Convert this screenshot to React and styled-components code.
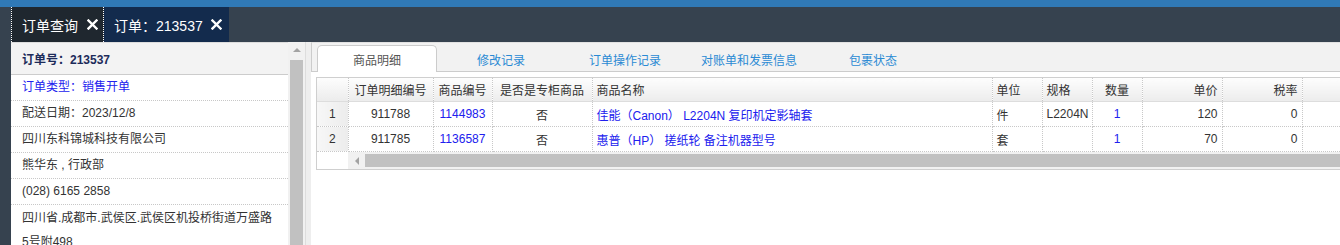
import React from 'react'
import styled, { createGlobalStyle } from 'styled-components'

const GlobalStyle = createGlobalStyle`
    html, body {
        margin: 0;
        padding: 0;
        overflow: hidden;
    }
    body {
        font-family: "Liberation Sans", "Noto Sans CJK SC", sans-serif;
        font-size: 12px;
        color: #333;
    }
`

const Page = styled.div`
    width: 1340px;
    height: 245px;
    display: flex;
    flex-direction: column;
    overflow: hidden;
`
const TopStripe = styled.div`
    height: 7px;
    background: #3079b6;
`
const PageTabs = styled.div`
    height: 35px;
    background: #36424f;
    display: flex;
    padding-left: 11px;
`
const PageTab = styled.div`
    display: flex;
    align-items: center;
    gap: ${p => (p.$current ? 8 : 9)}px;
    padding: 0 ${p => (p.$current ? 7 : 5)}px 0 10px;
    background: ${p => (p.$current ? '#132b4d' : '#1f272f')};
    border-left: ${p => (p.$current ? 'none' : '1px dotted #fff')};
    border-right: ${p => (p.$current ? 'none' : '1px dotted #fff')};
    color: #fff;
    font-size: 14px;
`
const Body = styled.div`
    flex: 1;
    display: flex;
    background: #36424f;
    padding-left: 11px;
    min-height: 0;
`
const LeftPanel = styled.div`
    width: 277px;
    background: #fff;
    overflow: hidden;
    display: flex;
    flex-direction: column;
`
const InfoHeader = styled.div`
    height: 31px;
    flex-shrink: 0;
    display: flex;
    align-items: center;
    padding-left: 11px;
    background: #f3f3f3;
    border-top: 1px solid #ddd;
    border-bottom: 1px solid #ccc;
    color: #1d2b5a;
    font-weight: bold;
`
const InfoRow = styled.div`
    flex-shrink: 0;
    min-height: 25px;
    line-height: ${p => (p.$wrap ? 24 : 25)}px;
    padding: ${p => (p.$wrap ? '1px' : '0')} 15px 0 11px;
    border-bottom: 1px dotted #c8c8c8;
    color: ${p => (p.$blue ? '#2222ee' : '#333')};
`
const VScroll = styled.div`
    width: 17px;
    background: #f1f1f1;
    display: flex;
    flex-direction: column;
    align-items: center;
`
const ArrowUp = styled.div`
    margin-top: 6px;
    width: 0;
    height: 0;
    border-left: 4px solid transparent;
    border-right: 4px solid transparent;
    border-bottom: 4px solid #a3a3a3;
`
const VThumb = styled.div`
    margin-top: 8px;
    width: 13px;
    flex: 1;
    background: #c1c1c1;
`
const Gutter = styled.div`
    width: 5px;
    background: #eee;
    border-left: 1px solid #ddd;
`
const RightPanel = styled.div`
    flex: 1;
    min-width: 0;
    background: #fff;
    overflow: hidden;
    display: flex;
    flex-direction: column;
`
const TabStrip = styled.div`
    height: 26px;
    padding: 2px 0 0 5px;
    display: flex;
    align-items: flex-start;
    gap: 4px;
    background: #f2f2f2;
    border-left: 1px solid #ccc;
    border-top: 1px solid #e2e2e2;
    border-bottom: 1px solid #ccc;
`
const Tab = styled.div`
    width: 118px;
    height: 26px;
    display: flex;
    align-items: center;
    justify-content: center;
    color: ${p => (p.$active ? '#555' : '#2a8ad4')};
    background: ${p => (p.$active ? '#fff' : 'transparent')};
    border: 1px solid ${p => (p.$active ? '#ccc' : 'transparent')};
    border-bottom: none;
    border-radius: 5px 5px 0 0;
    position: relative;
    z-index: 1;
`
const GridArea = styled.div`
    padding: 5px 0 0 5px;
`
const Grid = styled.div`
    width: 1100px;
    border: 1px solid #cfcfcf;
    border-right: none;
`
const Table = styled.table`
    border-collapse: collapse;
    table-layout: fixed;
    width: 1100px;
`
const Th = styled.th`
    height: 23px;
    padding: 0 4px;
    font-weight: normal;
    color: #333;
    text-align: ${p => p.$align || 'left'};
    background: linear-gradient(#fdfdfd, #ececec);
    border-right: 1px dotted #c8c8c8;
    border-bottom: 1px solid #ddd;
    white-space: nowrap;
    overflow: hidden;
`
const Td = styled.td`
    height: 24px;
    padding: 0 4px;
    text-align: ${p => p.$align || 'left'};
    color: ${p => (p.$blue ? '#2020ee' : '#333')};
    border-right: 1px dotted #c8c8c8;
    border-bottom: 1px dotted #c8c8c8;
    white-space: nowrap;
    overflow: hidden;
`
const RowNum = styled(Td)`
    background: linear-gradient(90deg, #f7f7f7, #ececec);
    text-align: center;
`
const HScroll = styled.div`
    height: 17px;
    display: flex;
`
const HBlank = styled.div`
    width: 31px;
    background: #fff;
`
const HTrack = styled.div`
    flex: 1;
    display: flex;
    align-items: center;
    background: #f1f1f1;
`
const ArrowLeft = styled.div`
    width: 17px;
    display: flex;
    justify-content: center;
    &::before {
        content: '';
        border-top: 4px solid transparent;
        border-bottom: 4px solid transparent;
        border-right: 4px solid #a3a3a3;
    }
`
const HThumb = styled.div`
    flex: 1;
    height: 13px;
    background: #c1c1c1;
`

function CloseIcon() {
    return (
        <svg width="11" height="11" viewBox="0 0 11 11">
            <path d="M1.5 1.5 L9.5 9.5 M9.5 1.5 L1.5 9.5" stroke="#fff" strokeWidth="2.4" strokeLinecap="square" />
        </svg>
    )
}

const columns = [
    { key: 'no', title: '', width: 31 },
    { key: 'id', title: '订单明细编号', width: 85, align: 'center' },
    { key: 'code', title: '商品编号', width: 59, align: 'center', blue: true },
    { key: 'counter', title: '是否是专柜商品', width: 100, align: 'center' },
    { key: 'name', title: '商品名称', width: 400, blue: true },
    { key: 'unit', title: '单位', width: 50 },
    { key: 'spec', title: '规格', width: 50 },
    { key: 'qty', title: '数量', width: 50, align: 'center', blue: true },
    { key: 'price', title: '单价', width: 80, align: 'right' },
    { key: 'tax', title: '税率', width: 80, align: 'right' },
    { key: 'more', title: '', width: 115 },
]

const rows = [
    { no: 1, id: '911788', code: '1144983', counter: '否', name: '佳能（Canon） L2204N 复印机定影轴套', unit: '件', spec: 'L2204N', qty: 1, price: 120, tax: 0, more: '' },
    { no: 2, id: '911785', code: '1136587', counter: '否', name: '惠普（HP） 搓纸轮 备注机器型号', unit: '套', spec: '', qty: 1, price: 70, tax: 0, more: '' },
]

const tabs = ['商品明细', '修改记录', '订单操作记录', '对账单和发票信息', '包裹状态']

export default function App() {
    return (
        <Page>
            <GlobalStyle />
            <TopStripe />
            <PageTabs>
                <PageTab>订单查询<CloseIcon /></PageTab>
                <PageTab $current>订单：213537<CloseIcon /></PageTab>
            </PageTabs>
            <Body>
                <LeftPanel>
                    <InfoHeader>订单号：213537</InfoHeader>
                    <InfoRow $blue>订单类型：销售开单</InfoRow>
                    <InfoRow>配送日期：2023/12/8</InfoRow>
                    <InfoRow>四川东科锦城科技有限公司</InfoRow>
                    <InfoRow>熊华东 , 行政部</InfoRow>
                    <InfoRow>(028) 6165 2858</InfoRow>
                    <InfoRow $wrap>四川省.成都市.武侯区.武侯区机投桥街道万盛路5号附498</InfoRow>
                </LeftPanel>
                <VScroll>
                    <ArrowUp />
                    <VThumb />
                </VScroll>
                <Gutter />
                <RightPanel>
                    <TabStrip>
                        {tabs.map((t, i) => (
                            <Tab key={t} $active={i === 0}>{t}</Tab>
                        ))}
                    </TabStrip>
                    <GridArea>
                        <Grid>
                            <Table>
                                <colgroup>
                                    {columns.map(c => <col key={c.key} style={{ width: c.width }} />)}
                                </colgroup>
                                <thead>
                                    <tr>
                                        {columns.map(c => <Th key={c.key} $align={c.align}>{c.title}</Th>)}
                                    </tr>
                                </thead>
                                <tbody>
                                    {rows.map(r => (
                                        <tr key={r.no}>
                                            {columns.map(c => c.key === 'no'
                                                ? <RowNum key={c.key}>{r.no}</RowNum>
                                                : <Td key={c.key} $align={c.align} $blue={c.blue}>{r[c.key]}</Td>
                                            )}
                                        </tr>
                                    ))}
                                </tbody>
                            </Table>
                            <HScroll>
                                <HBlank />
                                <HTrack>
                                    <ArrowLeft />
                                    <HThumb />
                                </HTrack>
                            </HScroll>
                        </Grid>
                    </GridArea>
                </RightPanel>
            </Body>
        </Page>
    )
}
